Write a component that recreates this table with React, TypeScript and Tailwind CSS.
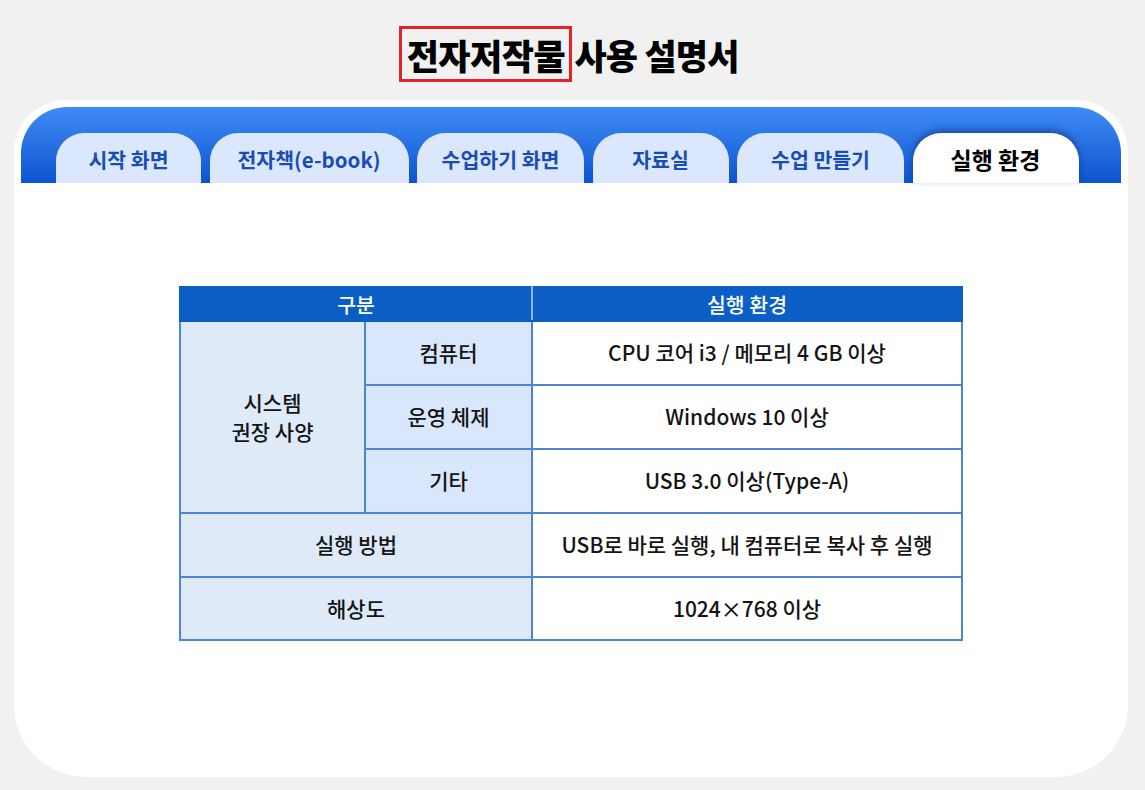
import React from "react";

const tabs = ["시작 화면", "전자책(e-book)", "수업하기 화면", "자료실", "수업 만들기", "실행 환경"];
const widths = ["w-[145px]", "w-[199px]", "w-[167px]", "w-[136px]", "w-[167px]", "w-[166px]"];

export default function App() {
  const font = { fontFamily: '"Noto Sans CJK KR", "Noto Sans", sans-serif' };
  const bd = "border-2 border-[#4f84cf]";
  return (
    <div className="w-full h-[790px] bg-[#f1f1f1] flex flex-col overflow-hidden" style={font}>
      <div className="h-[100px] flex items-start justify-center pt-[26px] pr-[7px]">
        <div className="flex items-center">
          <span className="border-[3px] border-[#e3222b] h-[56px] w-[173px] flex items-center justify-center text-[35px] font-black text-black tracking-[-0.5px] leading-none">
            전자저작물
          </span>
          <span className="ml-[2px] text-[35px] font-black text-black tracking-[-0.8px] leading-none">사용 설명서</span>
        </div>
      </div>
      <div className="ml-[14px] mr-[17px] h-[677px] bg-white rounded-t-[52px] rounded-b-[72px] p-[7px] flex flex-col">
        <div className="h-[76px] rounded-t-[46px] bg-gradient-to-b from-[#3f8bf5] to-[#0a54cf] flex items-end pl-[35px] gap-[8.5px]">
          {tabs.map((t, i) => {
            const active = i === tabs.length - 1;
            return (
              <div
                key={t}
                className={`${widths[i]} h-[50px] shrink-0 rounded-t-[28px] flex items-center justify-center pt-[2px] ${
                  active
                    ? "bg-white text-black text-[23px] font-bold shadow-[0_-3px_6px_rgba(10,40,110,0.55)]"
                    : "bg-[#dae7fc] text-[#1a4db3] text-[20.5px] font-bold"
                }`}
              >
                {t}
              </div>
            );
          })}
        </div>
        <div className="flex-1 flex justify-center pt-[103px]">
          <table className="border-collapse h-fit text-[21px] text-[#141414]" style={{ tableLayout: "fixed" }}>
            <colgroup>
              <col className="w-[185px]" />
              <col className="w-[167px]" />
              <col className="w-[430px]" />
            </colgroup>
            <thead>
              <tr className="h-[34px] bg-[#0a5ec6] text-white">
                <th colSpan={2} className="border-2 border-[#0a5ec6] border-r-[#8fb3e6] font-medium text-[20.5px] leading-[28px]">구분</th>
                <th className="border-2 border-[#0a5ec6] font-medium text-[20.5px] leading-[28px]">실행 환경</th>
              </tr>
            </thead>
            <tbody className="font-medium">
              <tr className="h-[64px]">
                <td rowSpan={3} className={`${bd} bg-[#dfeaf8] text-center`}>
                  <div className="flex flex-col items-center leading-[29px]">
                    <span>시스템</span>
                    <span>권장 사양</span>
                  </div>
                </td>
                <td className={`${bd} bg-[#d9e7fc] text-center`}>컴퓨터</td>
                <td className={`${bd} bg-white text-center`}>CPU 코어 i3 / 메모리 4 GB 이상</td>
              </tr>
              <tr className="h-[64px]">
                <td className={`${bd} bg-[#d9e7fc] text-center`}>운영 체제</td>
                <td className={`${bd} bg-white text-center`}>Windows 10 이상</td>
              </tr>
              <tr className="h-[64px]">
                <td className={`${bd} bg-[#d9e7fc] text-center`}>기타</td>
                <td className={`${bd} bg-white text-center`}>USB 3.0 이상(Type-A)</td>
              </tr>
              <tr className="h-[64px]">
                <td colSpan={2} className={`${bd} bg-[#dfeaf8] text-center`}>실행 방법</td>
                <td className={`${bd} bg-white text-center`}>USB로 바로 실행, 내 컴퓨터로 복사 후 실행</td>
              </tr>
              <tr className="h-[63px]">
                <td colSpan={2} className={`${bd} bg-[#dfeaf8] text-center`}>해상도</td>
                <td className={`${bd} bg-white text-center`}>1024×768 이상</td>
              </tr>
            </tbody>
          </table>
        </div>
      </div>
    </div>
  );
}
